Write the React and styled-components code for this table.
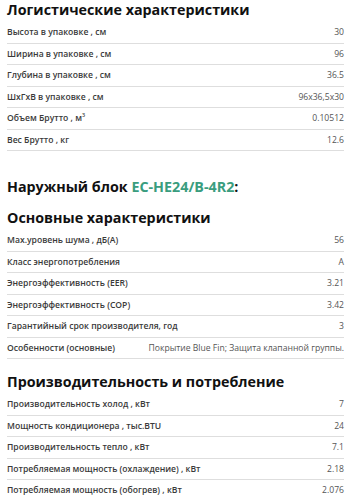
import React from "react";
import styled, { createGlobalStyle } from "styled-components";

const GlobalStyle = createGlobalStyle`
  body {
    margin: 0;
    background: #fff;
    font-family: "Open Sans", "Noto Sans", sans-serif;
  }
`;

const logistics = [
  ["Высота в упаковке , см", "30"],
  ["Ширина в упаковке , см", "96"],
  ["Глубина в упаковке , см", "36.5"],
  ["ШхГхВ в упаковке , см", "96x36,5x30"],
  [<>Объем Брутто , м<sup>3</sup></>, "0.10512"],
  ["Вес Брутто , кг", "12.6"],
];

const mainSpecs = [
  ["Max.уровень шума , дБ(А)", "56"],
  ["Класс энергопотребления", "A"],
  ["Энергоэффективность (EER)", "3.21"],
  ["Энергоэффективность (COP)", "3.42"],
  ["Гарантийный срок производителя, год", "3"],
  ["Особенности (основные)", "Покрытие Blue Fin; Защита клапанной группы."],
];

const performance = [
  ["Производительность холод , кВт", "7"],
  ["Мощность кондиционера , тыс.BTU", "24"],
  ["Производительность тепло , кВт", "7.1"],
  ["Потребляемая мощность (охлаждение) , кВт", "2.18"],
  ["Потребляемая мощность (обогрев) , кВт", "2.076"],
];

function SpecTable({ rows }) {
  return (
    <Table>
      {rows.map(([label, value], i) => (
        <Row key={i}>
          <Label>{label}</Label>
          <Value>{value}</Value>
        </Row>
      ))}
    </Table>
  );
}

export default function App() {
  return (
    <>
      <GlobalStyle />
      <Page>
        <Heading $top={0}>Логистические характеристики</Heading>
        <SpecTable rows={logistics} />

        <Heading $top={26}>
          Наружный блок <Model>EC-HE24/B-4R2</Model>:
        </Heading>
        <Heading $top={9}>Основные характеристики</Heading>
        <SpecTable rows={mainSpecs} />

        <Heading $top={13}>Производительность и потребление</Heading>
        <SpecTable rows={performance} />
      </Page>
    </>
  );
}

const Page = styled.div`
  padding: 0 6px 0 7px;
  display: flex;
  flex-direction: column;
`;

const Heading = styled.h3`
  margin: ${(p) => p.$top}px 0 2px;
  font-size: 14.3px;
  line-height: 20px;
  font-weight: 700;
  color: #111;
`;

const Model = styled.span`
  color: #3a9d7e;
`;

const Table = styled.div`
  display: flex;
  flex-direction: column;
`;

const Row = styled.div`
  display: flex;
  justify-content: space-between;
  align-items: center;
  gap: 10px;
  height: 21.5px;
  box-sizing: border-box;
  font-size: 8.6px;
  line-height: 12px;
  border-bottom: 1px solid #dedede;
`;

const Label = styled.span`
  font-weight: 600;
  color: #3a3a3a;
  white-space: nowrap;

  sup {
    font-size: 5.5px;
    line-height: 0;
  }
`;

const Value = styled.span`
  color: #555;
  text-align: right;
  white-space: nowrap;
`;
